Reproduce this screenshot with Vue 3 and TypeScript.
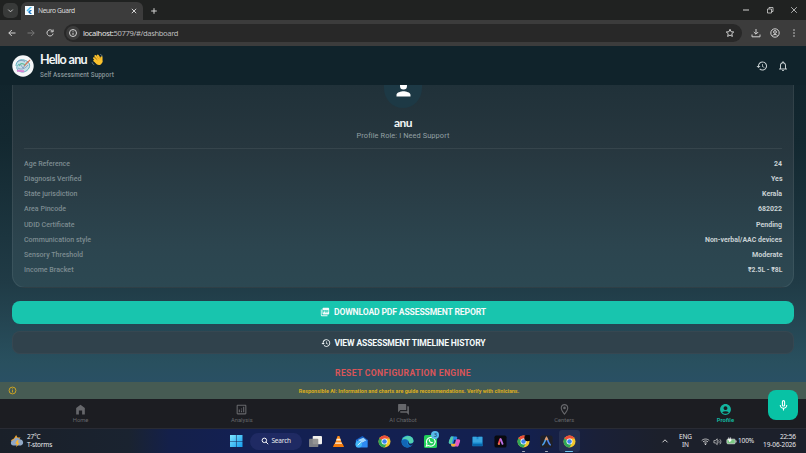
<script setup lang="ts">
interface Detail { label: string; value: string; lw: number; vw: number }
const details: Detail[] = [
  { label: 'Age Reference', value: '24', lw: 46, vw: 8 },
  { label: 'Diagnosis Verified', value: 'Yes', lw: 57.5, vw: 11.5 },
  { label: 'State jurisdiction', value: 'Kerala', lw: 53.5, vw: 20 },
  { label: 'Area Pincode', value: '682022', lw: 42, vw: 24 },
  { label: 'UDID Certificate', value: 'Pending', lw: 50.5, vw: 26 },
  { label: 'Communication style', value: 'Non-verbal/AAC devices', lw: 67, vw: 77 },
  { label: 'Sensory Threshold', value: 'Moderate', lw: 59, vw: 30.5 },
  { label: 'Income Bracket', value: '₹2.5L - ₹8L', lw: 49.5, vw: 34.5 },
]
interface NavItem { label: string; path: string; active?: boolean }
const nav: NavItem[] = [
  { label: 'Home', path: 'M12 3 4 9v12h5v-7h6v7h5V9z' },
  { label: 'Analysis', path: 'M19 3H5c-1.1 0-2 .9-2 2v14c0 1.100.9 2 2 2h14c1.100 0 2-.9 2-2V5c0-1.100-.9-2-2-2zm0 16H5V5h14v14zM7 12h2v5H7zM15 7h2v10h-2zM11 14h2v3h-2zM11 10h2v2h-2z' },
  { label: 'AI Chatbot', path: 'M21 6h-2v9H6v2c0 .55.45 1 1 1h11l4 4V7c0-.55-.45-1-1-1zm-4 6V3c0-.55-.45-1-1-1H3c-.55 0-1 .45-1 1v14l4-4h10c.55 0 1-.45 1-1z' },
  { label: 'Centers', path: 'M12 2C8.130 2 5 5.130 5 9c0 5.250 7 13 7 13s7-7.750 7-13c0-3.870-3.130-7-7-7zM7 9c0-2.760 2.240-5 5-5s5 2.240 5 5c0 2.880-2.880 7.190-5 9.880C9.920 16.210 7 11.850 7 9zm5-2.500a2.500 2.500 0 1 0 0 5 2.500 2.500 0 0 0 0-5z' },
  { label: 'Profile', active: true, path: 'M12 2C6.480 2 2 6.480 2 12s4.480 10 10 10 10-4.480 10-10S17.520 2 12 2zm0 4c1.930 0 3.500 1.570 3.500 3.500S13.930 13 12 13s-3.500-1.570-3.500-3.500S10.070 6 12 6zm0 14c-2.030 0-4.430-.82-6.140-2.880C7.550 15.800 9.680 15 12 15s4.450.8 6.140 2.120C16.430 19.180 14.030 20 12 20z' },
]
const history = 'M13 3a9 9 0 0 0-9 9H1l3.890 3.890.07.14L9 12H6a7 7 0 1 1 2.060 4.940l-1.420 1.420A9 9 0 1 0 13 3zm-1 5v5l4.280 2.540.72-1.210-3.500-2.080V8z'
</script>

<template>
  <div class="screen">
    <div class="tabs">
      <div class="tab-list"><svg viewBox="0 0 10 10"><path d="m2.500 4 2.500 2.500L7.500 4" class="ln" /></svg></div>
      <div class="tab">
        <svg class="favicon" viewBox="0 0 18 18"><rect width="18" height="18" fill="#f5fbff" /><path d="M10 2 3 9l2.200 2.200L14 2z" fill="#54c5f8" /><path d="m10 8-4 4 4 4h4l-4-4 4-4z" fill="#1976c5" /></svg>
        <span class="tab-title">Neuro Guard</span>
        <svg class="close" viewBox="0 0 8 8"><path d="m1.800 1.800 4.400 4.400m0-4.400L1.800 6.200" class="ln" /></svg>
      </div>
      <svg class="plus" viewBox="0 0 8 8"><path d="M4 1.200v5.600M1.200 4h5.600" class="ln" /></svg>
      <div class="window-buttons">
        <svg viewBox="0 0 10 10"><path d="M2 5h6" class="ln" /></svg>
        <svg viewBox="0 0 10 10"><path d="M2.500 4h4v4h-4zM4 3.800V2.500h4v4H6.600" class="ln thin" /></svg>
        <svg viewBox="0 0 10 10"><path d="m2.200 2.200 5.600 5.600m0-5.600L2.200 7.800" class="ln thin" /></svg>
      </div>
    </div>
    <div class="toolbar">
      <svg class="tb" viewBox="0 0 10 10"><path d="M8.500 5H1.800M4.800 2 1.800 5l3 3" class="ln" /></svg>
      <svg class="tb dim" viewBox="0 0 10 10"><path d="M1.500 5h6.700M5.200 2l3 3-3 3" class="ln" /></svg>
      <svg class="tb" viewBox="0 0 10 10"><path d="M7.800 3.400A3.100 3.100 0 1 0 8.100 5.600M8.100 1.500v2.300H5.700" class="ln" /></svg>
      <div class="omnibox">
        <div class="site"><svg viewBox="0 0 10 10"><circle cx="5" cy="5" r="3.500" class="ln" /><path d="M5 4.700v2.200M5 2.800v.9" class="ln" /></svg></div>
        <span class="url"><b>localhost:</b>50779/#/dashboard</span>
        <svg class="star" viewBox="0 0 24 24"><path d="m12 3 2.700 6 6.300.6-4.800 4.300 1.500 6.300L12 17l-5.700 3.200 1.500-6.300L3 9.600 9.300 9z" fill="none" stroke="#d0d0d0" stroke-width="2.400" /></svg>
      </div>
      <svg class="tb dl" viewBox="0 0 10 10"><path d="M5 1v5M2.800 4 5 6.200 7.200 4M1 6.500v2.300h8V6.500" class="ln" /></svg>
      <svg class="tb user" viewBox="0 0 10 10"><circle cx="5" cy="5" r="4.200" class="ln" /><circle cx="5" cy="4" r="1.400" class="ln" /><path d="M2.500 7.600C3.700 6.100 6.300 6.100 7.500 7.600" class="ln" /></svg>
      <svg class="tb more" viewBox="0 0 10 10" fill="#ccc"><circle cx="5" cy="2" r=".8" /><circle cx="5" cy="5" r=".8" /><circle cx="5" cy="8" r=".8" /></svg>
    </div>

    <main class="app">
      <header class="header">
        <svg class="avatar" viewBox="0 0 22 22"><circle cx="11" cy="11" r="10.700" fill="#f5f7f8" /><path d="M4 11c0-5 4-7 8-6s7 4 5 8-7 5-10 3-3-5 0-7" fill="#c4e0e6" stroke="#5fb0c0" /><path d="M5 7c3-2 6-2 8 0M6 13c3 2 7 1 10-3M8 9l3 4 5-7" fill="none" stroke="#6d84b4" stroke-width=".7" /><path d="m12 11 6-6" stroke="#df7755" stroke-width="1.100" /><path d="M5 16c3-1 5 1 7 0" fill="none" stroke="#d684d3" stroke-width="2" /><path d="M7 11c1-3 4-3 6-1" fill="none" stroke="#62b99f" stroke-width="1.300" /></svg>
        <div class="greeting">
          <div class="hello">
            <span class="hello-text">Hello anu</span>
            <svg class="wave" viewBox="0 0 24 24"><g fill="none" stroke="#fbc22d" stroke-linecap="round" stroke-width="3.600"><path d="m6 14 7 5M5.500 9.500l8 8M8 5.500l8 9M12.500 4.500l6 9M19.500 8v8" /></g><path d="m8 13 9-3c5 2 5 8 1 11s-8 0-11-4z" fill="#fbc22d" /><path d="m8.500 10 4 4M11 7l4 5M14.500 6.500l3 5" stroke="#d88a16" /><path d="M17 2.500c2 .4 3.500 2 4 4M2 17c.4 2.500 2 4 4 4.500" fill="none" stroke="#8c9ba0" stroke-width="1.300" /></svg>
          </div>
          <div class="subtitle">Self Assessment Support</div>
        </div>
        <svg class="h-icon" viewBox="0 0 24 24"><path :d="history" /></svg>
        <svg class="h-icon" viewBox="0 0 24 24"><path d="M12 22c1.100 0 2-.9 2-2h-4c0 1.100.9 2 2 2zm6-6v-5c0-3.070-1.630-5.640-4.500-6.320V4a1.500 1.500 0 0 0-3 0v.68C7.640 5.360 6 7.920 6 11v5l-2 2v1h16v-1zm-2 1H8v-6c0-2.480 1.510-4.500 4-4.500s4 2.020 4 4.500z" /></svg>
      </header>

      <div class="content">
        <section class="card">
          <div class="portrait"><svg viewBox="0 0 24 24"><path d="M12 12a4 4 0 1 0 0-8 4 4 0 0 0 0 8zm0 2c-2.670 0-8 1.340-8 4v2h16v-2c0-2.660-5.330-4-8-4z" /></svg></div>
          <div class="name">anu</div>
          <div class="role">Profile Role: I Need Support</div>
          <div class="divider"></div>
          <div v-for="d in details" :key="d.label" class="row">
            <svg class="label" height="12" :width="d.lw + 2"><text x="0" y="8.500" :textLength="d.lw" lengthAdjust="spacingAndGlyphs">{{ d.label }}</text></svg>
            <svg class="value" height="12" :width="d.vw"><text x="0" y="8.500" :textLength="d.vw" lengthAdjust="spacingAndGlyphs">{{ d.value }}</text></svg>
          </div>
        </section>
        <button class="btn primary">
          <svg viewBox="0 0 24 24"><path d="M20 2H8c-1.100 0-2 .9-2 2v12c0 1.100.9 2 2 2h12c1.100 0 2-.9 2-2V4c0-1.100-.9-2-2-2zm-8.500 7.500c0 .83-.67 1.500-1.500 1.500H9v2H7.500V7H10c.83 0 1.500.67 1.500 1.500zm5 2c0 .83-.67 1.500-1.500 1.500h-2.500V7H15c.83 0 1.500.67 1.500 1.500zm4-3H19v1h1.500V11H19v2h-1.500V7h3zM9 9.500h1v-1H9zM4 6H2v14c0 1.100.9 2 2 2h14v-2H4zm10 5.500h1v-3h-1z" /></svg>
          <span>DOWNLOAD PDF ASSESSMENT REPORT</span>
        </button>
        <button class="btn secondary">
          <svg viewBox="0 0 24 24"><path :d="history" /></svg>
          <span>VIEW ASSESSMENT TIMELINE HISTORY</span>
        </button>
        <div class="reset">RESET CONFIGURATION ENGINE</div>
      </div>

      <div class="notice">
        <svg viewBox="0 0 10 10"><circle cx="5" cy="5" r="3.800" /><path d="M5 4.600v2.500M5 2.700v1" /></svg>
        <span>Responsible AI: Information and charts are guide recommendations. Verify with clinicians.</span>
      </div>
      <nav class="nav">
        <div v-for="n in nav" :key="n.label" class="nav-item" :class="{ active: n.active }">
          <svg viewBox="0 0 24 24"><path :d="n.path" /></svg>
          <span>{{ n.label }}</span>
        </div>
      </nav>
      <button class="mic"><svg viewBox="0 0 24 24"><path d="M12 14c1.660 0 3-1.340 3-3V5a3 3 0 0 0-6 0v6c0 1.660 1.340 3 3 3zm-1-9a1 1 0 0 1 2 0v6a1 1 0 0 1-2 0zm6 6a5 5 0 0 1-10 0H5c0 3.530 2.610 6.430 6 6.920V21h2v-3.080c3.390-.49 6-3.390 6-6.920z" /></svg></button>
    </main>

    <footer class="taskbar">
      <div class="weather">
        <svg viewBox="0 0 16 16"><path d="m7 1 1.500 3L12 4l-2 3 1 3H4L1 7l3.500-2z" fill="#f1a52c" /><path d="M4 13a3 3 0 0 1 0-6 4 4 0 0 1 7-1 3.600 3.600 0 0 1 1.500 7z" fill="#91a8c6" /><path d="M8 7 6 11h2l-1 4 4-5H9l1-3z" fill="#ffb52e" /></svg>
        <div><div>27°C</div><div>T-storms</div></div>
      </div>
      <div class="dock">
        <svg class="win" viewBox="0 0 13 13"><defs><linearGradient id="w" x2="1" y2="1"><stop stop-color="#7de5ff" /><stop offset="1" stop-color="#139cec" /></linearGradient></defs><path d="M0 0h6.200v6.200H0zM6.800 0H13v6.200H6.800zM0 6.800h6.200V13H0zM6.800 6.800H13V13H6.800z" fill="url(#w)" /></svg>
        <div class="search"><svg viewBox="0 0 10 10"><circle cx="4.200" cy="4.200" r="2.800" /><path d="m6.300 6.300 2.700 2.700" /></svg><span>Search</span></div>
        <div class="slot s1"><svg viewBox="0 0 14 14"><rect x="4" y="1" width="10" height="9" rx="1" fill="#f1f0ed" /><rect y="4" width="10" height="9" rx="1" fill="#8a8b8a" opacity=".9" /></svg></div>
        <div class="slot"><svg viewBox="0 0 14 14"><path d="M6 1h2l3 9H3z" fill="#ff8b16" /><path d="m5.100 4-.7 2h5.200l-.7-2zM3.700 8 3 10h8l-.7-2z" fill="#fff1df" /><path d="M2.500 9.500h9L13 13H1z" fill="#f57b0c" /></svg></div>
        <div class="slot"><svg viewBox="0 0 14 14"><path d="m1 5 7-4 5.500 4v8H1z" fill="#135dc3" /><path d="m3 5.500 6-2.500 3.500 3-5 2.500z" fill="#9fd5fa" /><path d="M1 5.500 7 9l6.500-4v8.500H3a2 2 0 0 1-2-2z" fill="#2e8af1" /><circle cx="4" cy="10" r="3.500" fill="#41b7f8" /><path d="m2.800 11 4-3.500" stroke="#e8f6ff" /></svg></div>
        <div class="slot"><svg viewBox="0 0 24 24"><use href="#chrome" /></svg></div>
        <div class="slot"><svg viewBox="0 0 14 14"><circle cx="7" cy="7" r="6.500" fill="#168bd4" /><path d="M1 5C4-1 14 0 13.400 7 13 10 8 10 8.500 7 7 4 3 4 1 5z" fill="#53d1b1" /><path d="M1 6c5-3 7 0 6 2-1 3 2 4 5 2-4 7-13 2-11-4z" fill="#1266b5" /><path d="M7.500 6.500c1 1 .3 2 1.500 2.700 2 .7 4-.2 4.400-2.200L14 9l-2 2c-3 1-5-1-4.500-4.500" fill="#152053" /></svg></div>
        <div class="slot"><svg viewBox="0 0 14 14"><rect width="14" height="14" rx="2" fill="#20ce59" /><path d="m2.500 12 .7-2.500a4.700 4.700 0 1 1 1.700 1.800z" fill="none" stroke="#fff" stroke-width="1.200" /><path d="M5 5c0 2 2 4 4 4l.8-1-1.400-.8-.6.500-1.500-1.500.4-.6L6 4.300z" fill="#fff" /></svg><i class="badge">3</i></div>
        <div class="slot"><svg viewBox="0 0 14 14"><path d="M4.500 1.500h4a1.500 1.500 0 0 1 1.500 1L8 11a2 2 0 0 1-2 1.500H4.500c-1.500 0-1-2-2-3H2C0 9 1 7 2 4s1.500-2.500 2.500-2.500z" fill="#2889e5" /><path d="M3 2.500c.5-1 1-1 2-1h1L4 9.500H2C0 9 1 6 3 2.500z" fill="#55c9a6" /><path d="M9 4.500h2.500C14 5 13 7 12 10s-1.500 2.500-3 2.500H5.500C7 12 7.300 10 8 7.500s.5-2.500 1-3z" fill="#e45bc2" /><path d="M4.500 9.500h4L8 11c-.5 1-1 1.500-2 1.500H4.500c-1 0-1-2-1.500-3z" fill="#f6ad33" /><path d="M6.700 5h1.800l-1.300 4.200H5.500z" fill="#15204d" /></svg></div>
        <div class="slot"><svg viewBox="0 0 14 14"><path d="M1.500 2h11v10h-11z" fill="#188cd0" /><path d="M2 2h4v2.500h2V2h4v6H2z" fill="#39a5df" /><path d="M2 9.500h10V12H2z" fill="#0867ad" /></svg></div>
        <div class="slot"><svg viewBox="0 0 14 14"><rect x=".5" y=".5" width="13" height="13" rx="2" fill="#08090f" /><path d="M6.800 4.500 5 9.500" stroke="#ee425d" stroke-width="2" stroke-linecap="round" /><path d="m7.200 4.500 2 5" stroke="#b970e6" stroke-width="2" stroke-linecap="round" /><path d="M4.500 9.700h2" stroke="#f09e35" stroke-width="1.300" /></svg></div>
        <div class="slot run"><svg viewBox="0 0 24 24"><use href="#chrome" /><circle cx="19.500" cy="5.500" r="6" fill="#08090c" /></svg></div>
        <div class="slot run"><svg viewBox="0 0 14 14"><rect x=".5" y=".5" width="13" height="13" rx="2" fill="#202027" /><path d="M7 3C5 6 5 10 2.500 11" fill="none" stroke="#4c9fe9" stroke-width="1.800" /><path d="M7 3c2 3 2 7 4.500 8" fill="none" stroke="#4c86ee" stroke-width="1.800" /><path d="M5.800 5.500 7 3l1.200 2.500" fill="none" stroke="#e59a66" stroke-width="1.600" /></svg></div>
        <div class="slot run current"><svg viewBox="0 0 24 24"><g id="chrome"><circle cx="12" cy="12" r="11" fill="#f4c72d" /><path d="M12 12 2.500 6.500A11 11 0 0 1 21.500 6.500H12z" fill="#ed4d3b" /><path d="M2.500 6.500A11 11 0 0 0 12 23l4.500-8.300L12 12z" fill="#2fa857" /><circle cx="12" cy="12" r="5.500" fill="#fff" /><circle cx="12" cy="12" r="4.200" fill="#3981ed" /></g></svg></div>
      </div>
      <div class="tray">
        <svg class="up" viewBox="0 0 8 8"><path d="m1.500 5.300 2.500-2.500 2.500 2.500" class="ln" /></svg>
        <div class="lang"><div>ENG</div><div>IN</div></div>
        <svg class="wifi" viewBox="0 0 10 10"><path d="M.8 4C3 1.700 7 1.700 9.200 4M2.200 5.500c1.500-1.500 4.100-1.500 5.600 0M3.600 7c.8-.8 2-.8 2.800 0" class="ln" /><circle cx="5" cy="8" r=".8" fill="#eee" /></svg>
        <svg class="sound" viewBox="0 0 10 10"><path d="M1 4v2.500h1.500l2.200 2V2l-2.200 2zM6.200 3.800c.8 1 .8 2 0 3M7.600 2.500c1.600 1.800 1.600 3.700 0 5.500" class="ln thin" /></svg>
        <svg class="battery" viewBox="0 0 12 8"><rect x="1" y="2" width="9" height="5" rx="1" fill="#7ac982" stroke="#ddd" stroke-width=".8" /><path d="M11 3.500v2" stroke="#ddd" /><path d="M3 0v2M5 0v2M2.500 2h3v1.500L4 5z" fill="#fff" stroke="#fff" stroke-width=".7" /></svg>
        <span class="pct">100%</span>
        <div class="clock"><div>22:56</div><div>19-06-2026</div></div>
      </div>
    </footer>
  </div>
</template>

<style>
body { margin: 0; background: #1c1d22; overflow: hidden; }
</style>
<style scoped>
* { box-sizing: border-box; }
svg { display: block; flex: none; }
button { border: 0; padding: 0; font: inherit; color: inherit; }
.screen { width: 806px; height: 453px; display: flex; flex-direction: column; font-family: Roboto, sans-serif; color: #fff; overflow: hidden; }
.ln { fill: none; stroke: #d2d2d2; stroke-width: 1; }
.thin { stroke-width: .8; }
.tabs { height: 20px; flex: none; display: flex; align-items: center; background: #202221; padding-left: 3px; }
.tab-list { width: 15px; height: 15px; border-radius: 5px; background: #383a39; display: grid; place-items: center; margin-top: 1px; }
.tab-list svg { width: 9px; }
.tab { width: 122px; height: 18px; margin: 2px 0 0 3px; border-radius: 6px 6px 0 0; background: #3c3c3c; display: flex; align-items: center; padding: 0 5px 1px 4px; }
.favicon { width: 9px; height: 9px; }
.tab-title { font: 6.700px "Noto Sans", sans-serif; letter-spacing: -.38px; color: #ddd; margin-left: 4px; flex: 1; }
.close, .plus { width: 8px; height: 8px; }
.plus { margin: 1px 0 0 6.500px; }
.window-buttons { margin-left: auto; display: flex; gap: 14px; padding-right: 7px; }
.window-buttons svg { width: 10px; height: 10px; }
.toolbar { height: 26px; flex: none; background: #3c3c3c; display: flex; align-items: center; padding: 0 7px; }
.tb { width: 10px; height: 10px; margin-right: 9px; }
.dim { opacity: .4; }
.omnibox { width: 678px; height: 18px; border-radius: 9px; background: #282828; display: flex; align-items: center; padding: 0 7px 0 2px; }
.site { width: 14px; height: 14px; border-radius: 50%; background: #3c3c3c; display: grid; place-items: center; }
.site svg { width: 10px; }
.url { font: 7.600px "Noto Sans", sans-serif; letter-spacing: -.36px; color: #bdbdbd; margin-left: 3px; flex: 1; }
.url b { font-weight: 400; color: #e6e6e6; }
.star { width: 10px; height: 10px; }
.dl { margin: 0 9px; }
.user { margin-right: 9px; }
.more { margin: 0; }
.app { position: relative; height: 382px; flex: none; display: flex; flex-direction: column; background: linear-gradient(#10222a 0, #132830 25%, #203b46 62%, #29505f 83%, #2a5066 90%); }
.header { height: 39px; flex: none; background: #10232b; display: flex; align-items: center; padding: 0 17px 0 12px; }
.avatar { width: 22px; height: 22px; }
.greeting { flex: 1; margin-left: 6px; }
.hello { display: flex; align-items: center; height: 16px; }
.hello-text { font: 700 12.600px/16px Lato, sans-serif; letter-spacing: -.72px; color: #f2f5f6; white-space: nowrap; }
.wave { width: 13px; height: 13px; margin-left: 4.500px; }
.subtitle { font-size: 6.300px; line-height: 8px; color: #89969a; font-weight: 500; letter-spacing: .1px; margin: 3px 0 1px; }
.h-icon { width: 12px; height: 12px; fill: #c8d0d2; margin-left: 9px; }
.content { height: 297px; flex: none; overflow: hidden; padding: 0 12px; display: flex; flex-direction: column; align-items: stretch; }
.card { height: 203px; flex: none; border: 1px solid rgba(255,255,255,.07); border-top: 0; border-radius: 0 0 13px 13px; background: linear-gradient(#203139, #27373f 32%, #2c454f 80%, #2c4852); display: flex; flex-direction: column; align-items: center; padding: 0 11px; }
.portrait { width: 38px; height: 23px; flex: none; border-radius: 0 0 19px 19px / 0 0 20px 20px; background: #1d3945; overflow: hidden; display: flex; align-items: flex-end; justify-content: center; padding-bottom: 8.500px; }
.portrait svg { width: 21px; height: 21px; fill: #fff; }
.name { margin-top: 7px; font: 700 12px/15px Lato, sans-serif; letter-spacing: -.6px; color: #f2f5f6; }
.role { font-size: 7.400px; line-height: 9px; color: #94a0a4; letter-spacing: .09px; margin-top: 1px; }
.divider { width: 100%; height: 1px; background: rgba(255,255,255,.07); margin: 8px 0 6.500px; flex: none; }
.row { width: 100%; height: 15.150px; flex: none; display: flex; align-items: center; justify-content: space-between; font-size: 6.900px; }
.label text { fill: #7d8c91; font-weight: 500; }
.value { overflow: visible; }
.value text { fill: #c9d1d4; font-weight: 700; }
.btn { height: 23px; flex: none; border-radius: 8px; display: flex; align-items: center; justify-content: center; font-size: 8.600px; font-weight: 700; color: #f4fafa; }
.btn svg { width: 10px; height: 10px; fill: currentColor; margin-right: 4px; }
.btn span { letter-spacing: -.15px; }
.primary { margin-top: 12.500px; background: #18c5ae; }
.secondary { margin-top: 7.500px; background: #30424c; border: 1px solid rgba(255,255,255,.03); }
.reset { text-align: center; margin-top: 13px; font-size: 8.600px; line-height: 12px; font-weight: 700; color: #d85559; letter-spacing: .34px; }
.notice { height: 17px; flex: none; background: #465b53; display: flex; align-items: center; padding: 0 5px 0 8px; }
.notice svg { width: 9px; height: 9px; fill: none; stroke: #d7a91d; stroke-width: 1; }
.notice span { flex: 1; text-align: center; font-size: 5.450px; color: #dcae1b; font-weight: 700; }
.nav { height: 29px; flex: none; background: #1c1d22; display: flex; }
.nav-item { flex: 1; display: flex; flex-direction: column; align-items: center; padding-top: 4px; color: #66676b; font-size: 5.800px; line-height: 8px; }
.nav-item svg { width: 13px; height: 13px; fill: currentColor; }
.nav-item.active { color: #13b59f; font-weight: 700; }
.mic { position: absolute; left: 768px; top: 344px; width: 30px; height: 30px; border-radius: 8px; background: #08c2a5; display: grid; place-items: center; }
.mic svg { width: 13px; height: 13px; fill: #fff; }
.taskbar { height: 25px; flex: none; display: flex; align-items: center; background: linear-gradient(90deg, #1a2029, #1a2330 16%, #14204a 21%, #132053 30%, #13204f 65%, #1a2038 74%, #1c202b 82%); border-top: 1px solid #292b34; font: 6.500px/8px "Noto Sans", sans-serif; color: #e8e9ec; }
.weather { width: 220px; flex: none; display: flex; align-items: center; padding-left: 10px; gap: 3px; letter-spacing: -.2px; }
.weather svg { width: 14px; height: 14px; }
.dock { display: flex; align-items: center; height: 24px; padding-left: 10px; }
.win { width: 12.500px; height: 12.500px; }
.search { width: 52px; height: 17px; border-radius: 9px; background: #1f2a63; display: flex; align-items: center; padding-left: 11px; gap: 3px; margin-left: 7px; letter-spacing: -.2px; }
.search svg { width: 8px; height: 8px; fill: none; stroke: #fff; stroke-width: 1.200; }
.slot { width: 23.080px; height: 22px; position: relative; display: grid; place-items: center; }
.s1 { margin-left: 2.500px; }
.slot svg { width: 13px; height: 13px; }
.badge { position: absolute; left: 12px; top: 1px; width: 8px; height: 8px; border-radius: 50%; background: #56b9ec; color: #12355d; font: 6px/8px "Noto Sans", sans-serif; text-align: center; }
.run::after { content: ""; position: absolute; bottom: 0; left: 10px; width: 3px; height: 1px; border-radius: 1px; background: #a8adba; }
.current { background: #253052; border-radius: 3px; width: 21px; margin-left: 1px; }
.current::after { width: 8px; left: 6.500px; background: #70c7ef; }
.tray { flex: 1; display: flex; align-items: center; justify-content: flex-end; padding-right: 10px; }
.up { width: 8px; height: 8px; margin-right: 10px; }
.lang { width: 13px; text-align: center; margin-right: 9px; letter-spacing: -.1px; }
.wifi { width: 9px; height: 9px; margin-right: 3px; }
.sound { width: 9px; height: 9px; margin-right: 4px; }
.battery { width: 11px; height: 8px; margin-right: 1px; }
.pct { width: 17px; letter-spacing: -.1px; }
.clock { text-align: right; width: 41px; letter-spacing: -.1px; }
</style>
